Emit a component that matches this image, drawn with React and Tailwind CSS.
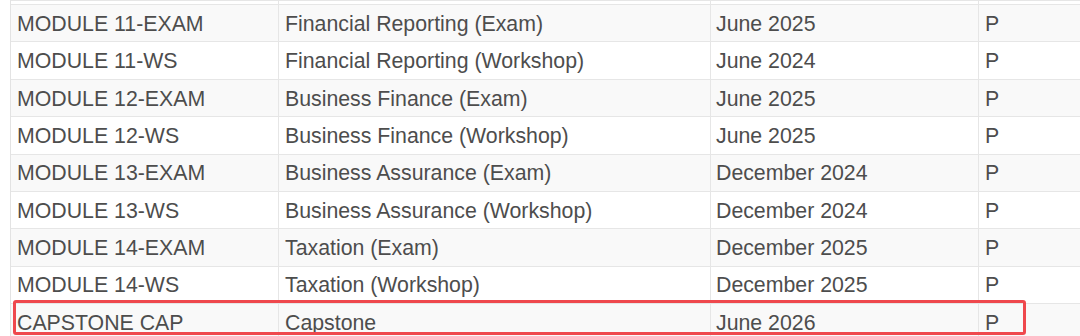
import React from 'react';

const rows = [
  { code: 'MODULE 11-EXAM', title: 'Financial Reporting (Exam)', date: 'June 2025', status: 'P' },
  { code: 'MODULE 11-WS', title: 'Financial Reporting (Workshop)', date: 'June 2024', status: 'P' },
  { code: 'MODULE 12-EXAM', title: 'Business Finance (Exam)', date: 'June 2025', status: 'P' },
  { code: 'MODULE 12-WS', title: 'Business Finance (Workshop)', date: 'June 2025', status: 'P' },
  { code: 'MODULE 13-EXAM', title: 'Business Assurance (Exam)', date: 'December 2024', status: 'P' },
  { code: 'MODULE 13-WS', title: 'Business Assurance (Workshop)', date: 'December 2024', status: 'P' },
  { code: 'MODULE 14-EXAM', title: 'Taxation (Exam)', date: 'December 2025', status: 'P' },
  { code: 'MODULE 14-WS', title: 'Taxation (Workshop)', date: 'December 2025', status: 'P' },
  { code: 'CAPSTONE CAP', title: 'Capstone', date: 'June 2026', status: 'P', highlight: true },
];

const cols = 'grid grid-cols-[268px_432px_268px_1fr]';

const App = () => {
  return (
    <div
      className="w-[1080px] h-[336px] overflow-hidden bg-white pl-[10px]"
      style={{ fontFamily: '"Liberation Sans", Arial, sans-serif' }}
    >
      <div className="border-l border-[#e3e3e3] text-[21.3px] text-[#4d4d4d]">
        {/* tail of the row above */}
        <div className={`${cols} h-[5px] border-t border-b border-[#e6e6e6] bg-white`}>
          <div className="border-r border-[#e6e6e6]" />
          <div className="border-r border-[#e6e6e6]" />
          <div className="border-r border-[#e6e6e6]" />
          <div />
        </div>

        {rows.map((row, i) => (
          <div
            key={row.code}
            className={`relative ${cols} h-[37.4px] border-b border-[#e6e6e6] ${
              i % 2 === 0 ? 'bg-[#f9f9f9]' : 'bg-white'
            }`}
          >
            <div className="flex items-center pl-[6px] pt-[3px] border-r border-[#e6e6e6] whitespace-nowrap">{row.code}</div>
            <div className="flex items-center pl-[6px] pt-[3px] border-r border-[#e6e6e6] whitespace-nowrap">{row.title}</div>
            <div className="flex items-center pl-[5px] pt-[3px] border-r border-[#e6e6e6] whitespace-nowrap">{row.date}</div>
            <div className="flex items-center pl-[6px] pt-[3px] whitespace-nowrap">{row.status}</div>
            {row.highlight && (
              <div className="absolute left-[2px] top-[-4px] w-[1013px] h-[35px] border-[3px] border-[#ef484d] rounded-[3px] pointer-events-none" />
            )}
          </div>
        ))}
      </div>
    </div>
  );
};

export default App;
